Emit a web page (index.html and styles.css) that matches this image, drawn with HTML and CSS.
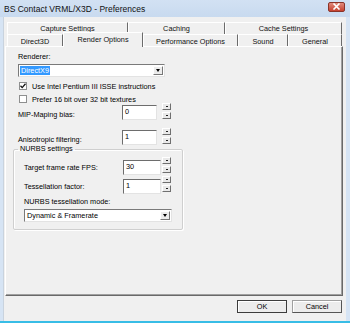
FILE: index.html
```html
<!DOCTYPE html>
<html lang="en">
<head>
  <meta charset="UTF-8">
  <title>BS Contact VRML/X3D - Preferences</title>
  <link rel="stylesheet" href="styles.css">
</head>
<body>
  <div class="window">
    <!-- Title bar -->
    <div class="titlebar">
      <span class="title">BS Contact VRML/X3D - Preferences</span>
      <div class="close-btn">
        <svg width="9" height="7" viewBox="0 0 9 7"><path d="M1.5 0.5 L7.5 6.5 M7.5 0.5 L1.5 6.5" stroke="#fff" stroke-width="1.6"/></svg>
      </div>
    </div>

    <div class="client">
      <!-- Tabs -->
      <div class="tabs">
        <div class="tab-row back">
          <div class="tab" style="width: 121px">Capture Settings</div>
          <div class="tab" style="width: 97px">Caching</div>
          <div class="tab" style="width: 117px">Cache Settings</div>
        </div>
        <div class="tab-row front">
          <div class="tab" style="width: 56px">Direct3D</div>
          <div class="tab selected" style="width: 80px">Render Options</div>
          <div class="tab" style="width: 95px">Performance Options</div>
          <div class="tab" style="width: 50px">Sound</div>
          <div class="tab" style="width: 54px">General</div>
        </div>
      </div>

      <!-- Panel -->
      <div class="panel">
        <div class="label first">Renderer:</div>
        <div class="combo renderer">
          <span class="combo-value highlighted">DirectX9</span>
          <span class="drop-btn"><span class="arrow"></span></span>
        </div>

        <div class="check-row first-check">
          <span class="checkbox">
            <svg width="6" height="6" viewBox="0 0 6 6"><path d="M0.5 2.8 L2.2 4.6 L5.5 0.8" stroke="#111" stroke-width="1.3" fill="none"/></svg>
          </span>
          <span>Use Intel Pentium III ISSE instructions</span>
        </div>
        <div class="check-row">
          <span class="checkbox"></span>
          <span>Prefer 16 bit over 32 bit textures</span>
        </div>

        <div class="field-row mip">
          <span class="field-label">MIP-Maping bias:</span>
          <span class="edit">0</span>
          <span class="spinner">
            <span class="spin-btn"><span class="dot"></span></span>
            <span class="spin-btn"><span class="dot"></span></span>
          </span>
        </div>
        <div class="field-row aniso">
          <span class="field-label">Anisotropic filtering:</span>
          <span class="edit">1</span>
          <span class="spinner">
            <span class="spin-btn"><span class="dot"></span></span>
            <span class="spin-btn"><span class="dot"></span></span>
          </span>
        </div>

        <fieldset class="group">
          <legend>NURBS settings</legend>
          <div class="field-row nurbs">
            <span class="field-label">Target frame rate FPS:</span>
            <span class="edit">30</span>
            <span class="spinner">
              <span class="spin-btn"><span class="dot"></span></span>
              <span class="spin-btn"><span class="dot"></span></span>
            </span>
          </div>
          <div class="field-row nurbs tess">
            <span class="field-label">Tessellation factor:</span>
            <span class="edit">1</span>
            <span class="spinner">
              <span class="spin-btn"><span class="dot"></span></span>
              <span class="spin-btn"><span class="dot"></span></span>
            </span>
          </div>
          <div class="label mode">NURBS tessellation mode:</div>
          <div class="combo mode-combo">
            <span class="combo-value">Dynamic &amp; Framerate</span>
            <span class="drop-btn"><span class="arrow"></span></span>
          </div>
        </fieldset>
      </div>

      <!-- Buttons -->
      <div class="footer">
        <div class="button default">OK</div>
        <div class="button">Cancel</div>
      </div>
    </div>
  </div>
</body>
</html>
```

FILE: styles.css
```css
/* General */
body {
  margin: 0;
  padding: 0;
  font-family: "Liberation Sans", Arial, sans-serif;
  font-size: 7.3px;
  color: #000;
  overflow: hidden;
}

/* Window frame */
.window {
  width: 350px;
  height: 323px;
  box-sizing: border-box;
  display: flex;
  flex-direction: column;
  background-color: #d6e4f4;
  border-bottom: 2px solid #38bde6;
}

.titlebar {
  height: 17px;
  display: flex;
  align-items: center;
  justify-content: space-between;
  padding: 0 5px 0 4px;
  background: linear-gradient(#d2e1f3, #c8daef);
}

.title {
  font-size: 8.5px;
  color: #111;
}

.close-btn {
  width: 17px;
  height: 10px;
  box-sizing: border-box;
  margin-top: -4px;
  display: flex;
  justify-content: center;
  align-items: center;
  background: linear-gradient(#e08a7c, #c7412f);
  border: 1px solid #8a3328;
  border-radius: 2px;
}

/* Client area */
.client {
  flex: 1;
  display: flex;
  flex-direction: column;
  margin: 0 4px 0 3px;
  padding: 5px 3px 0 1px;
  background-color: #f0f0f0;
  border-left: 1px solid #c9d3de;
}

/* Tabs */
.tabs {
  margin: 0 1px 0 2px;
}

.tab-row {
  display: flex;
  height: 12px;
}

.tab {
  box-sizing: border-box;
  height: 12px;
  display: flex;
  align-items: center;
  justify-content: center;
  border-top: 1px solid #fff;
  border-left: 1px solid #fff;
  border-right: 1px solid #6b6b6b;
  color: #111;
  white-space: nowrap;
}

.front .tab {
  padding-top: 1px;
}

.tab.selected {
  position: relative;
  z-index: 1;
  height: 15px;
  margin-top: -2px;
  padding-top: 0;
  padding-bottom: 2px;
  background-color: #f0f0f0;
  border-left: 1px solid #fff;
}

/* Panel */
.panel {
  flex: 1;
  box-sizing: border-box;
  padding: 0 12px;
  border-top: 1px solid #fff;
  border-left: 1px solid #fff;
  border-right: 1px solid #696969;
  border-bottom: 1px solid #696969;
  box-shadow: inset -1px -1px 0 #a0a0a0;
}

.label {
  height: 10px;
  line-height: 10px;
}

.label.first {
  margin-top: 5px;
}

/* Combo boxes */
.combo {
  box-sizing: border-box;
  height: 13px;
  display: flex;
  align-items: center;
  justify-content: space-between;
  margin-top: 2px;
  padding: 0 1px;
  background-color: #fff;
  border-top: 1px solid #7a7a7a;
  border-left: 1px solid #7a7a7a;
  border-right: 1px solid #e3e3e3;
  border-bottom: 1px solid #e3e3e3;
}

.renderer {
  width: 147px;
}

.combo-value {
  line-height: 9px;
  padding: 0 1px;
}

.highlighted {
  background-color: #3399ff;
  color: #fff;
}

.drop-btn {
  width: 10px;
  height: 9px;
  box-sizing: border-box;
  display: flex;
  align-items: center;
  justify-content: center;
  background-color: #ececec;
  border-top: 1px solid #fff;
  border-left: 1px solid #fff;
  border-right: 1px solid #777;
  border-bottom: 1px solid #777;
}

.arrow {
  width: 0;
  height: 0;
  border-left: 2.5px solid transparent;
  border-right: 2.5px solid transparent;
  border-top: 3px solid #000;
}

/* Checkboxes */
.check-row {
  display: flex;
  align-items: center;
  gap: 5px;
  height: 10px;
  margin-top: 3px;
  padding-left: 1px;
}

.check-row.first-check {
  margin-top: 4px;
}

.checkbox {
  width: 8px;
  height: 8px;
  box-sizing: border-box;
  display: flex;
  align-items: center;
  justify-content: center;
  background-color: #fff;
  border: 1px solid #8e8f8f;
}

/* Spin fields */
.field-row {
  display: flex;
  align-items: flex-end;
  height: 15px;
}

.field-row.mip {
  margin-top: 1px;
}

.field-row.aniso {
  margin-top: 10px;
}

.field-label {
  width: 104px;
  line-height: 6px;
  padding-bottom: 2px;
}

.edit {
  box-sizing: border-box;
  width: 35px;
  height: 15px;
  padding: 1px 2px;
  line-height: 10px;
  background-color: #fff;
  border-top: 1px solid #6d6d6d;
  border-left: 1px solid #6d6d6d;
  border-right: 1px solid #e3e3e3;
  border-bottom: 1px solid #e3e3e3;
}

.spinner {
  align-self: flex-start;
  display: flex;
  flex-direction: column;
  gap: 2px;
  margin: -2px 0 0 5px;
}

.spin-btn {
  width: 9px;
  height: 7px;
  box-sizing: border-box;
  display: flex;
  align-items: center;
  justify-content: center;
  background-color: #e9e9e9;
  border-top: 1px solid #fff;
  border-left: 1px solid #fff;
  border-right: 1px solid #6f6f6f;
  border-bottom: 1px solid #6f6f6f;
}

.dot {
  width: 2px;
  height: 1px;
  background-color: #222;
}

/* NURBS group */
.group {
  box-sizing: border-box;
  width: 167px;
  margin: 1px 0 0 -5px;
  padding: 8px 10px 7px 10px;
  border: 1px solid #cfcfcf;
  border-radius: 2px;
  box-shadow: 1px 1px 0 #fff, inset 1px 1px 0 #fff;
}

.group legend {
  margin-left: -6px;
  padding: 0 2px;
  line-height: 6px;
}

.field-row.nurbs {
  align-items: center;
}

.nurbs .field-label {
  width: 99px;
  line-height: 10px;
  padding-bottom: 0;
}

.nurbs .edit {
  width: 38px;
}

.nurbs .spinner {
  margin-left: 1px;
  margin-top: -3px;
}

.field-row.tess {
  margin-top: 4px;
}

.label.mode {
  margin-top: 3px;
}

.mode-combo {
  width: 148px;
}

/* Footer buttons */
.footer {
  display: flex;
  justify-content: flex-end;
  gap: 5px;
  padding: 4px 1px 8px 0;
}

.button {
  box-sizing: border-box;
  width: 50px;
  height: 13px;
  display: flex;
  align-items: center;
  justify-content: center;
  background-color: #ececec;
  border: 1px solid #a0a0a0;
  border-right-color: #555;
  border-bottom-color: #555;
  box-shadow: inset 1px 1px 0 #fff;
}

.button.default {
  border: 1px solid #3c3c3c;
}
```
